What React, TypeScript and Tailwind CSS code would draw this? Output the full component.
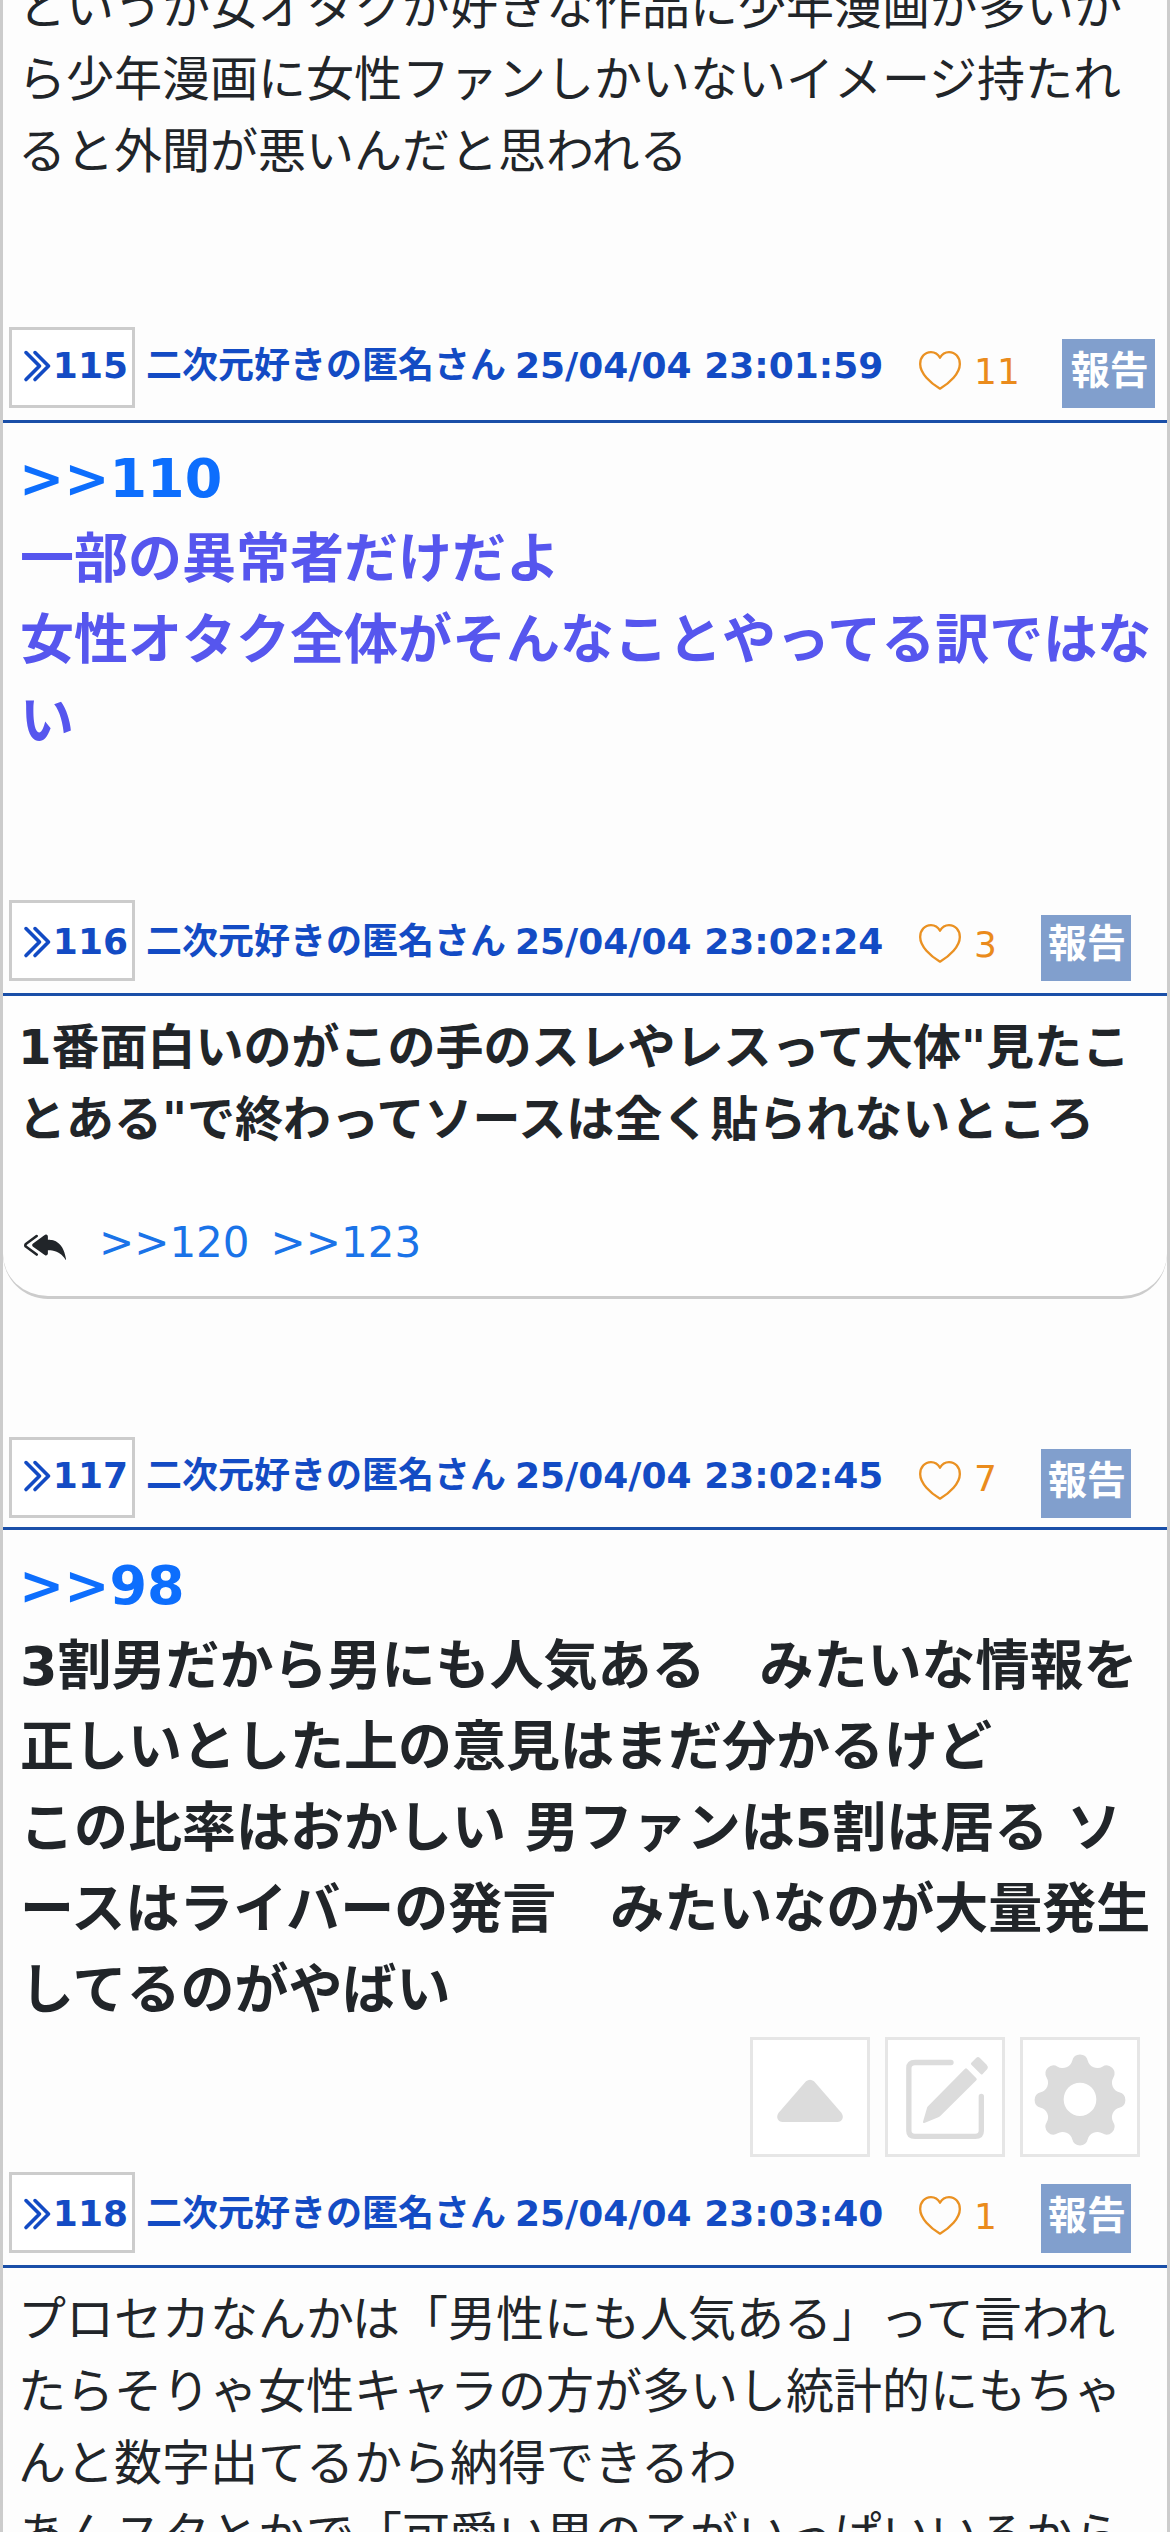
import { BsChevronDoubleRight, BsReplyAllFill } from "react-icons/bs";
import clsx from "clsx";

type Post = {
    id: number;
    time: string;
    likes: number;
    anchor?: string;
    lines: string[];
    replies?: string[];
    header: string;
    number: string;
    meta: string;
    count: string;
    report: string;
    body: string;
};

const posts: Post[] = [
    {
        id: 115,
        time: "25/04/04 23:01:59",
        likes: 11,
        anchor: ">>110",
        lines: [
            "一部の異常者だけだよ",
            "女性オタク全体がそんなことやってる訳ではな",
            "い",
        ],
        header: "mt-[141px] h-[96px] pb-[12px]",
        number: "pb-[21px]",
        meta: "mb-[24px]",
        count: "mb-[18px]",
        report: "ml-[42px] h-[69px] w-[93px] pt-[12px] pl-[9px]",
        body: "h-[477px] px-[17px] pt-[15px] text-[54px] leading-[81px] font-bold text-[#5656ee]",
    },
    {
        id: 116,
        time: "25/04/04 23:02:24",
        likes: 3,
        lines: [
            '1番面白いのがこの手のスレやレスって大体"見たこ',
            'とある"で終わってソースは全く貼られないところ',
        ],
        replies: [">>120", ">>123"],
        header: "h-[96px] pb-[12px]",
        number: "pb-[18px]",
        meta: "mb-[21px]",
        count: "mb-[18px]",
        report: "ml-[44px] h-[66px] w-[90px] pt-[9px] pl-[7px]",
        body: "h-[303px] rounded-b-[45px] border-b-[3px] border-[#ccc] bg-[#fefefe] px-[15px] pt-[15px] text-[48px] leading-[72px] font-bold",
    },
    {
        id: 117,
        time: "25/04/04 23:02:45",
        likes: 7,
        anchor: ">>98",
        lines: [
            "3割男だから男にも人気ある　みたいな情報を",
            "正しいとした上の意見はまだ分かるけど",
            "この比率はおかしい 男ファンは5割は居る ソ",
            "ースはライバーの発言　みたいなのが大量発生",
            "してるのがやばい",
        ],
        header: "mt-[138px] h-[93px] pb-[9px]",
        number: "pb-[21px]",
        meta: "mb-[24px]",
        count: "mb-[21px]",
        report: "ml-[44px] h-[69px] w-[90px] pt-[12px] pl-[7px]",
        body: "h-[642px] px-[17px] pt-[15px] text-[54px] leading-[81px] font-bold",
    },
    {
        id: 118,
        time: "25/04/04 23:03:40",
        likes: 1,
        lines: [
            "プロセカなんかは「男性にも人気ある」って言われ",
            "たらそりゃ女性キャラの方が多いし統計的にもちゃ",
            "んと数字出てるから納得できるわ",
            "あんスタとかで「可愛い男の子がいっぱいいるから",
        ],
        header: "h-[96px] pb-[12px]",
        number: "pb-[18px]",
        meta: "mb-[21px]",
        count: "mb-[18px]",
        report: "ml-[44px] h-[69px] w-[90px] pt-[12px] pl-[7px]",
        body: "px-[15px] pt-[15px] text-[48px] leading-[72px]",
    },
];

// eight round teeth joined by concave arcs
const point = (deg: number) => {
    const rad = (deg * Math.PI) / 180;
    return `${(180 + 120.2 * Math.cos(rad)).toFixed(1)} ${(189 + 120.2 * Math.sin(rad)).toFixed(1)}`;
};
const gearPath =
    `M${point(-11.2)}` +
    Array.from({ length: 8 })
        .map(
            (_, i) =>
                `A24 24 0 0 1 ${point(i * 45 + 11.2)}A29.5 29.5 0 0 0 ${point(i * 45 + 33.8)}`,
        )
        .join("") +
    "ZM229 187a49 50 0 1 0-98 0a49 50 0 1 0 98 0Z";

function Heart() {
    return (
        <svg
            viewBox="0 0 126 117"
            className="mb-[18px] ml-[35px] h-[39px] w-[42px] shrink-0"
            fill="none"
            stroke="#ea9122"
            strokeWidth="7"
            strokeLinejoin="round"
        >
            <path d="M63 20C56 8 46 3.5 36 3.5C17 3.5 3.5 19 3.5 39C3.5 67 34 96 63 113C92 96 122.5 67 122.5 39C122.5 19 109 3.5 90 3.5C80 3.5 70 8 63 20Z" />
        </svg>
    );
}

function PostHeader({ post }: { post: Post }) {
    return (
        <div
            className={clsx(
                "flex items-end border-b-[3px] border-[#1a4fa8] pl-[6px] text-[36px] leading-[36px] whitespace-pre",
                post.header,
            )}
        >
            <div
                className={clsx(
                    "flex h-[81px] w-[126px] shrink-0 items-end justify-end border-[3px] border-[#ccc] bg-white pr-[4px] font-bold text-[#134bc4]",
                    post.number,
                )}
            >
                <BsChevronDoubleRight
                    className="size-[36px] shrink-0"
                    strokeWidth={0.6}
                />
                <span>{post.id}</span>
            </div>
            <div
                className={clsx(
                    "ml-[11px] flex w-[738px] shrink-0 gap-[9px] font-bold text-[#134bc4]",
                    post.meta,
                )}
            >
                <span>二次元好きの匿名さん</span>
                <time>{post.time}</time>
            </div>
            <Heart />
            <span className={clsx("ml-[13px] text-[#ea8b1c]", post.count)}>
                {post.likes}
            </span>
            <button
                className={clsx(
                    "flex shrink-0 items-start bg-[#819fcd] text-[39px] leading-[39px] font-bold text-white",
                    post.report,
                )}
            >
                報告
            </button>
        </div>
    );
}

function PostBody({ post }: { post: Post }) {
    return (
        <div className={clsx("whitespace-pre", post.body)}>
            {post.anchor && (
                <p className="-ml-px text-[#0d6efd]">{post.anchor}</p>
            )}
            {post.lines.map((line) => (
                <p key={line}>{line}</p>
            ))}
            {post.replies && (
                <div className="mt-[56px] flex items-center pl-[6px] text-[42px] leading-[63px] font-normal">
                    <BsReplyAllFill className="mt-[5px] mr-[33px] size-[42px]" />
                    <div className="flex gap-[21px] text-[#1a73e8]">
                        {post.replies.map((reply) => (
                            <a key={reply}>{reply}</a>
                        ))}
                    </div>
                </div>
            )}
        </div>
    );
}

function FloatingMenu() {
    const button = "size-[120px] border-[3px] border-[#e6e6e6] bg-white";
    const icon = "-m-[3px] size-[120px] max-w-none";
    return (
        <div className="absolute top-[2037px] right-[27px] flex gap-[15px]">
            <button className={button}>
                <svg viewBox="0 0 360 360" className={icon} fill="#dcdcdc">
                    <path d="M168 133Q180 123 192 133L274 227C284 240 276 255 262 255H98C84 255 76 240 86 227Z" />
                </svg>
            </button>
            <button className={button}>
                <svg viewBox="0 0 360 360" className={icon} fill="#dcdcdc">
                    <path
                        d="M198 76.500H90Q71.500 76.500 71.500 94V281Q71.500 298 90 298H271Q289 298 289 281V178"
                        fill="none"
                        stroke="#dcdcdc"
                        strokeWidth="16"
                        strokeLinecap="round"
                    />
                    <path d="M240 95Q243 92 246 95L274 124Q277 127 274 130L165 238Q163 240 160 241L118 258Q113 259 114 254L126 213Q127 210 129 208Z" />
                    <path d="M259 77L274 62Q279 58 284 62L305 83Q311 89 307 96L293 111Q290 114 287 111L259 83Q256 80 259 77Z" />
                </svg>
            </button>
            <button className={button}>
                <svg viewBox="0 0 360 360" className={icon} fill="#dcdcdc">
                    <path d={gearPath} fillRule="evenodd" />
                </svg>
            </button>
        </div>
    );
}

export default function App() {
    return (
        <div className="relative h-[2532px] w-[1170px] overflow-hidden border-x-[3px] border-[#ccc] bg-[#fdfdfd] font-['DejaVu_Sans','Noto_Sans_CJK_JP',sans-serif] text-[#212529]">
            <div className="-mt-[29px] mb-[-1px] px-[15px] text-[48px] leading-[72px] whitespace-pre">
                <p>というか女オタクが好きな作品に少年漫画が多いか</p>
                <p>ら少年漫画に女性ファンしかいないイメージ持たれ</p>
                <p>ると外聞が悪いんだと思われる</p>
            </div>
            {posts.map((post) => (
                <article key={post.id}>
                    <PostHeader post={post} />
                    <PostBody post={post} />
                </article>
            ))}
            <FloatingMenu />
        </div>
    );
}
